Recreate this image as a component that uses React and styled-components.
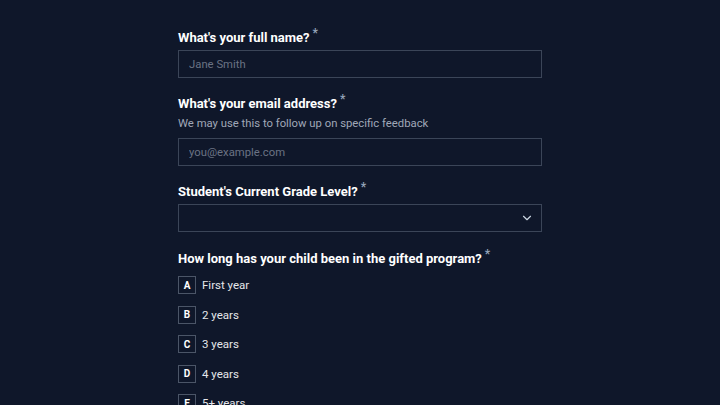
import React from 'react'
import styled, { createGlobalStyle } from 'styled-components'
import { ChevronDown } from 'lucide-react'

const GlobalStyle = createGlobalStyle`
  html, body {
    margin: 0;
    padding: 0;
    background: #0f172a;
    font-family: Roboto, "Noto Sans", sans-serif;
    color: #f8fafc;
  }
`

const options = [
  ['A', 'First year'],
  ['B', '2 years'],
  ['C', '3 years'],
  ['D', '4 years'],
  ['E', '5+ years'],
]

function App() {
  return (
    <>
      <GlobalStyle />
      <Page>
        <Form>
          <Field>
            <Label>What's your full name?<Star>*</Star></Label>
            <Input type="text" placeholder="Jane Smith" />
          </Field>
          <Field>
            <Label>What's your email address?<Star>*</Star></Label>
            <Help>We may use this to follow up on specific feedback</Help>
            <Input type="email" placeholder="you@example.com" />
          </Field>
          <Field>
            <Label>Student's Current Grade Level?<Star>*</Star></Label>
            <Select>
              <ChevronDown size={14} strokeWidth={2} color="#cbd5e1" />
            </Select>
          </Field>
          <Field>
            <Label>How long has your child been in the gifted program?<Star>*</Star></Label>
            <Choices>
              {options.map(([key, text]) => (
                <Choice key={key}>
                  <KeyBox>{key}</KeyBox>
                  <ChoiceText>{text}</ChoiceText>
                </Choice>
              ))}
            </Choices>
          </Field>
        </Form>
      </Page>
    </>
  )
}

export default App

const Page = styled.div`
  height: 405px;
  overflow: hidden;
  display: flex;
  justify-content: center;
  padding-top: 28px;
  box-sizing: border-box;
`

const Form = styled.div`
  width: 364px;
  display: flex;
  flex-direction: column;
  gap: 16px;
`

const Field = styled.div`
  display: flex;
  flex-direction: column;
  &:last-child {
    margin-top: 1px;
  }
`

const Label = styled.label`
  font-size: 13px;
  line-height: 18px;
  font-weight: 700;
  color: #ffffff;
  padding-top: 1px;
  margin-bottom: 3px;
`

const Star = styled.span`
  font-size: 12px;
  line-height: 0;
  color: #94a3b8;
  vertical-align: 5px;
  margin-left: 3px;
`

const Help = styled.div`
  font-size: 11.3px;
  line-height: 16px;
  color: #a0a8b8;
  margin-bottom: 6px;
`

const Input = styled.input`
  box-sizing: border-box;
  height: 28px;
  width: 100%;
  background: #0f172a;
  border: 1px solid #3b4558;
  outline: none;
  padding: 0 10px;
  font-family: inherit;
  font-size: 11.3px;
  color: #f1f5f9;
  &::placeholder {
    color: #6b7384;
  }
`

const Select = styled.div`
  box-sizing: border-box;
  height: 28px;
  border: 1px solid #3b4558;
  display: flex;
  align-items: center;
  justify-content: flex-end;
  padding-right: 7px;
`

const Choices = styled.div`
  display: flex;
  flex-direction: column;
  gap: 11.6px;
  margin-top: 5px;
`

const Choice = styled.div`
  display: flex;
  align-items: center;
  gap: 6px;
`

const KeyBox = styled.span`
  box-sizing: border-box;
  width: 18px;
  height: 18px;
  border: 1px solid #4b5567;
  display: flex;
  align-items: center;
  justify-content: center;
  font-size: 10px;
  font-weight: 700;
  color: #ffffff;
`

const ChoiceText = styled.span`
  font-size: 11.5px;
  color: #e5e7eb;
`
